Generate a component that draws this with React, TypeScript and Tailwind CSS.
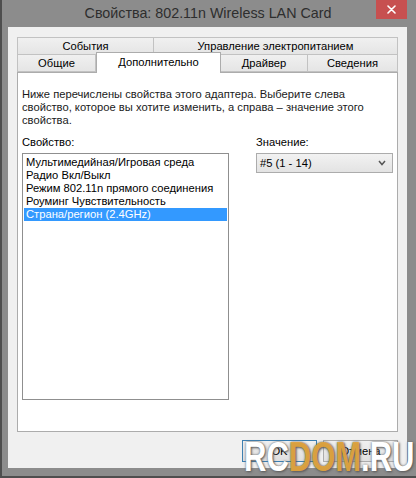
import React from "react"

const font = "font-['Liberation_Sans',Arial,sans-serif]"

const properties = [
  "Мультимедийная/Игровая среда",
  "Радио Вкл/Выкл",
  "Режим 802.11n прямого соединения",
  "Роуминг Чувствительность",
  "Страна/регион (2.4GHz)",
]

function Tab({
  label,
  width,
  active = false,
}: {
  label: string
  width: string
  active?: boolean
}) {
  if (active) {
    return (
      <div
        className={`relative z-10 -mb-px -mt-[2px] flex h-[21px] items-center justify-center border border-b-0 border-[#acacac] bg-white pb-[2px] ${width}`}
      >
        {label}
      </div>
    )
  }
  return (
    <div
      className={`flex h-[18px] items-center justify-center border border-[#c2c2c2] bg-gradient-to-b from-[#f0f0f0] to-[#e5e5e5] -ml-px first:ml-0 ${width}`}
    >
      {label}
    </div>
  )
}

function CloseButton() {
  return (
    <div className="absolute right-[9px] top-0 flex h-[19px] w-[31px] items-center justify-center bg-[#c75050]">
      <svg width="9" height="9" viewBox="0 0 9 9">
        <path
          d="M1 1 L8 8 M8 1 L1 8"
          stroke="white"
          strokeWidth="1.6"
          strokeLinecap="round"
        />
      </svg>
    </div>
  )
}

function Button({ label, primary = false }: { label: string; primary?: boolean }) {
  return (
    <button
      className={`h-[22px] w-[75px] border bg-gradient-to-b from-[#f0f0f0] to-[#e0e0e0] text-[11.2px] text-black ${
        primary ? "border-[#3c7fb1]" : "border-[#acacac]"
      }`}
    >
      {label}
    </button>
  )
}

export default function App() {
  return (
    <div
      className={`relative h-[478px] w-[416px] overflow-hidden border-b-2 border-l-2 border-[#4e4e4e] bg-[#8c8c8c] ${font}`}
    >
      {/* title bar */}
      <div className="relative flex h-[27px] items-center justify-center pr-[2px] text-[14.3px] text-[#2e2e2e]">
        Свойства: 802.11n Wireless LAN Card
        <CloseButton />
      </div>

      {/* client area */}
      <div className="ml-[6px] mr-[9px] flex h-[441px] flex-col bg-[#f0f0f0] px-[9px] pt-[10px] text-[11.2px] leading-[13px] text-black">
        {/* tabs */}
        <div className="flex">
          <Tab label="События" width="w-[137px]" />
          <Tab label="Управление электропитанием" width="w-[245px]" />
        </div>
        <div className="-mt-px flex items-end">
          <Tab label="Общие" width="w-[79px]" />
          <Tab label="Дополнительно" width="w-[125px]" active />
          <Tab label="Драйвер" width="w-[88px]" />
          <Tab label="Сведения" width="w-[91px]" />
        </div>

        {/* page */}
        <div className="flex h-[360px] flex-col border border-[#acacac] bg-white px-[4px] pt-[15px]">
          <p className="text-[#1a1a1a]">
            <span className="block">Ниже перечислены свойства этого адаптера. Выберите слева</span>
            <span className="block">свойство, которое вы хотите изменить, а справа – значение этого</span>
            <span className="block">свойства.</span>
          </p>

          <div className="mt-[9px] flex gap-[27px]">
            <div className="w-[207px]">
              <div className="h-[13px]">Свойство:</div>
              <div className="mt-[4px] h-[247px] border border-[#8f8f8f] bg-white p-px pt-[2px]">
                {properties.map((p, i) => (
                  <div
                    key={p}
                    className={`h-[13px] whitespace-nowrap pl-[2px] ${
                      i === 4 ? "bg-[#3399ff] text-white" : ""
                    }`}
                  >
                    {p}
                  </div>
                ))}
              </div>
            </div>

            <div className="w-[137px]">
              <div className="h-[13px]">Значение:</div>
              <div className="mt-[4px] flex h-[20px] items-center justify-between border border-[#acacac] bg-gradient-to-b from-[#f2f2f2] to-[#e3e3e3] pl-[3px] pr-[6px]">
                <span>#5 (1 - 14)</span>
                <svg width="8" height="6" viewBox="0 0 8 6">
                  <path d="M1 1 L4 4.5 L7 1" fill="none" stroke="#555" strokeWidth="1.5" />
                </svg>
              </div>
            </div>
          </div>
        </div>

        {/* dialog buttons */}
        <div className="mt-[8px] flex justify-end gap-[6px]">
          <Button label="OK" primary />
          <Button label="Отмена" />
        </div>
      </div>

      {/* site watermark */}
      <div className="pointer-events-none absolute left-[242px] top-[440px] flex origin-top scale-y-[1.35] text-[31px] font-bold leading-[0.85] [text-shadow:0_0_2px_#6b6b6b,1px_1px_2px_#555]">
        <span className="text-white">RC</span>
        <span className="text-[#eeaa38]/85">DOM</span>
        <span className="text-white">.RU</span>
      </div>
    </div>
  )
}
